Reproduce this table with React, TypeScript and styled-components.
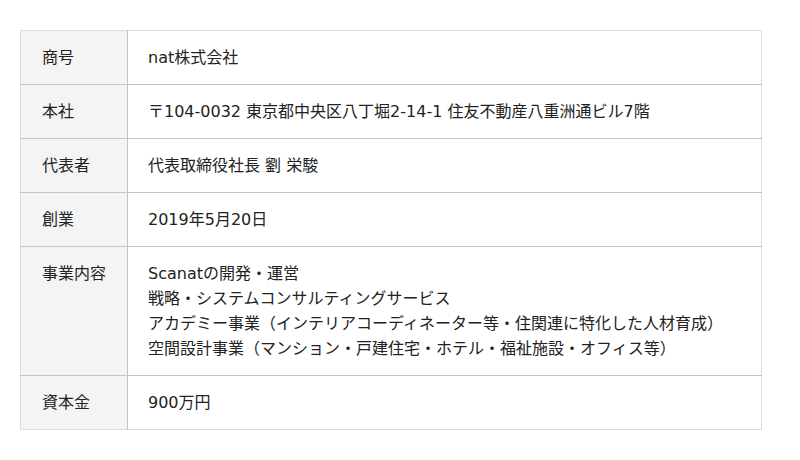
import * as React from "react";
import styled, { createGlobalStyle } from "styled-components";

const GlobalStyle = createGlobalStyle`
  html, body {
    margin: 0;
    padding: 0;
    background: #fff;
  }
  body {
    font-family: "DejaVu Sans", "Noto Sans CJK JP", sans-serif;
    color: #222;
  }
`;

const Page = styled.div`
  padding: 30px 38px 0 20px;
`;

const Table = styled.table`
  width: 742px;
  table-layout: fixed;
  border-collapse: collapse;
  border: 1px solid #dcdcdc;
  font-size: 16px;
  line-height: 25px;
`;

const Row = styled.tr`
  border-bottom: 1px solid #c4c4c4;
  &:last-child {
    border-bottom: 1px solid #dcdcdc;
  }
`;

const Label = styled.th`
  box-sizing: border-box;
  width: 107px;
  padding: 14px 0 14px 21px;
  background: #f4f4f4;
  border-right: 1px solid #c4c4c4;
  text-align: left;
  vertical-align: top;
  font-weight: normal;
  color: #222;
`;

const Value = styled.td`
  padding: 14px 20px 14px 20px;
  vertical-align: top;
  color: #222;
`;

const Line = styled.div`
  white-space: nowrap;
`;

const rows: { label: string; lines: string[] }[] = [
  { label: "商号", lines: ["nat株式会社"] },
  { label: "本社", lines: ["〒104-0032 東京都中央区八丁堀2-14-1 住友不動産八重洲通ビル7階"] },
  { label: "代表者", lines: ["代表取締役社長 劉 栄駿"] },
  { label: "創業", lines: ["2019年5月20日"] },
  {
    label: "事業内容",
    lines: [
      "Scanatの開発・運営",
      "戦略・システムコンサルティングサービス",
      "アカデミー事業（インテリアコーディネーター等・住関連に特化した人材育成）",
      "空間設計事業（マンション・戸建住宅・ホテル・福祉施設・オフィス等）",
    ],
  },
  { label: "資本金", lines: ["900万円"] },
];

export default function App() {
  return (
    <Page>
      <GlobalStyle />
      <Table>
        <tbody>
          {rows.map((r) => (
            <Row key={r.label}>
              <Label>{r.label}</Label>
              <Value>
                {r.lines.map((l) => (
                  <Line key={l}>{l}</Line>
                ))}
              </Value>
            </Row>
          ))}
        </tbody>
      </Table>
    </Page>
  );
}
